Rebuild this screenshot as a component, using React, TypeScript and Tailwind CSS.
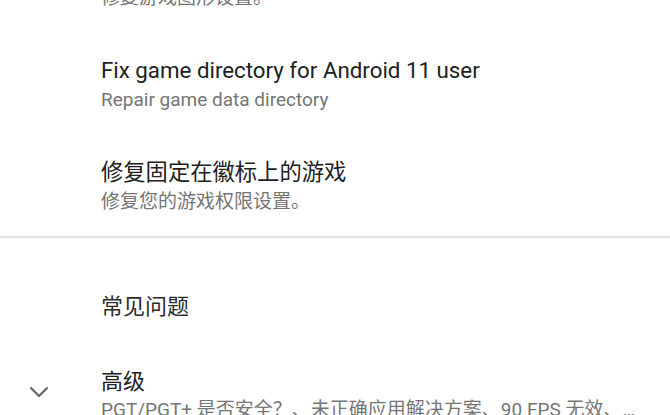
import { ChevronDown } from 'lucide-react';

const font = { fontFamily: 'Roboto, "Noto Sans CJK SC", sans-serif' };

type PrefProps = {
  title: string;
  summary: string;
  className?: string;
};

const Pref = ({ title, summary, className }: PrefProps) => (
  <div className={`pl-[101px] pr-4 pt-[22px] ${className ?? 'pb-[22px]'}`}>
    <div className="text-[22.3px] leading-[29px] text-[#212121]">{title}</div>
    <div className="text-[19px] leading-[29px] text-[#757575] truncate">{summary}</div>
  </div>
);

const App = () => {
  return (
    <div className="w-[670px] h-[415px] overflow-hidden bg-white" style={font}>
      <Pref className="-mt-[68px] pb-[22px]" title="修复游戏图形" summary="修复游戏图形设置。" />
      <Pref title="Fix game directory for Android 11 user" summary="Repair game data directory" />
      <Pref className="pb-[20px]" title="修复固定在徽标上的游戏" summary="修复您的游戏权限设置。" />
      <div className="h-[2px] bg-[#e2e2e2]" />
      <div className="pl-[101px] pt-[54px] text-[22px] leading-[29px] text-[#2b2b2b]">常见问题</div>
      <div className="flex items-center pt-[46px]">
        <div className="w-[101px] flex justify-center pr-[24px] pb-[7px]">
          <ChevronDown className="w-[32px] h-[32px] text-[#5f5f5f]" strokeWidth={1.5} />
        </div>
        <div className="flex-1 min-w-0 pr-4">
          <div className="text-[22px] leading-[29px] text-[#212121]">高级</div>
          <div className="text-[19px] leading-[27px] text-[#757575] truncate">
            PGT/PGT+ 是否安全？、未正确应用解决方案、90 FPS 无效、如何更改分辨率
          </div>
        </div>
      </div>
    </div>
  );
};

export default App;
